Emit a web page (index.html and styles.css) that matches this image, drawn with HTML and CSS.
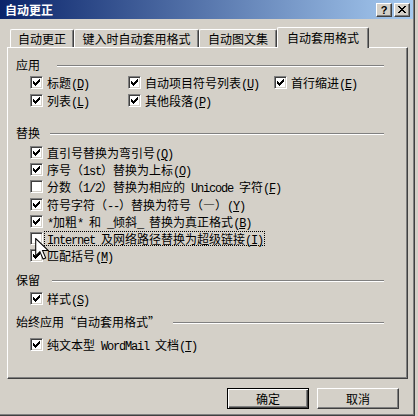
FILE: index.html
```html
<!DOCTYPE html>
<html lang="zh-CN">
<head>
<meta charset="utf-8">
<title>自动更正</title>
<link rel="stylesheet" href="styles.css">
</head>
<body>
<div class="window">
  <div class="titlebar">
    <span class="title">自动更正</span>
    <div class="tb-buttons">
      <span class="tb-btn help">?</span>
      <span class="tb-btn close"><svg width="8" height="7" viewBox="0 0 8 7" shape-rendering="crispEdges"><path d="M0 0h2v1H0zM6 0h2v1H6zM1 1h2v1H1zM5 1h2v1H5zM2 2h4v1H2zM3 3h2v1H3zM2 4h4v1H2zM1 5h2v1H1zM5 5h2v1H5zM0 6h2v1H0zM6 6h2v1H6z" fill="#000"/></svg></span>
    </div>
  </div>

  <div class="tabs">
    <div class="tab t1">自动更正</div>
    <div class="tab t2">键入时自动套用格式</div>
    <div class="tab t3">自动图文集</div>
    <div class="tab active">自动套用格式</div>
  </div>

  <div class="panel">
    <div class="group g-apply">
      <div class="glabel"><span class="gtext w-apply">应用</span><i class="rule"></i></div>
      <div class="rows">
        <div class="row">
          <div class="cell c1"><span class="box"><svg class="chk" width="11" height="11" viewBox="0 0 11 11" shape-rendering="crispEdges"><path d="M2 4h1v3H2zM3 5h1v3H3zM4 6h1v3H4zM5 5h1v3H5zM6 4h1v3H6zM7 3h1v3H7zM8 2h1v3H8z"/></svg></span><span class="lbl">标题<span class="m">(<u>D</u>)</span></span></div>
          <div class="cell c2"><span class="box"><svg class="chk" width="11" height="11" viewBox="0 0 11 11" shape-rendering="crispEdges"><path d="M2 4h1v3H2zM3 5h1v3H3zM4 6h1v3H4zM5 5h1v3H5zM6 4h1v3H6zM7 3h1v3H7zM8 2h1v3H8z"/></svg></span><span class="lbl">自动项目符号列表<span class="m">(<u>U</u>)</span></span></div>
          <div class="cell"><span class="box"><svg class="chk" width="11" height="11" viewBox="0 0 11 11" shape-rendering="crispEdges"><path d="M2 4h1v3H2zM3 5h1v3H3zM4 6h1v3H4zM5 5h1v3H5zM6 4h1v3H6zM7 3h1v3H7zM8 2h1v3H8z"/></svg></span><span class="lbl">首行缩进<span class="m">(<u>E</u>)</span></span></div>
        </div>
        <div class="row">
          <div class="cell c1"><span class="box"><svg class="chk" width="11" height="11" viewBox="0 0 11 11" shape-rendering="crispEdges"><path d="M2 4h1v3H2zM3 5h1v3H3zM4 6h1v3H4zM5 5h1v3H5zM6 4h1v3H6zM7 3h1v3H7zM8 2h1v3H8z"/></svg></span><span class="lbl">列表<span class="m">(<u>L</u>)</span></span></div>
          <div class="cell c2"><span class="box"><svg class="chk" width="11" height="11" viewBox="0 0 11 11" shape-rendering="crispEdges"><path d="M2 4h1v3H2zM3 5h1v3H3zM4 6h1v3H4zM5 5h1v3H5zM6 4h1v3H6zM7 3h1v3H7zM8 2h1v3H8z"/></svg></span><span class="lbl">其他段落<span class="m">(<u>P</u>)</span></span></div>
        </div>
      </div>
    </div>

    <div class="group g-replace">
      <div class="glabel"><span class="gtext w-replace">替换</span><i class="rule"></i></div>
      <div class="rows tight">
        <div class="row"><span class="box"><svg class="chk" width="11" height="11" viewBox="0 0 11 11" shape-rendering="crispEdges"><path d="M2 4h1v3H2zM3 5h1v3H3zM4 6h1v3H4zM5 5h1v3H5zM6 4h1v3H6zM7 3h1v3H7zM8 2h1v3H8z"/></svg></span><span class="lbl">直引号替换为弯引号<span class="m">(<u>Q</u>)</span></span></div>
        <div class="row"><span class="box"><svg class="chk" width="11" height="11" viewBox="0 0 11 11" shape-rendering="crispEdges"><path d="M2 4h1v3H2zM3 5h1v3H3zM4 6h1v3H4zM5 5h1v3H5zM6 4h1v3H6zM7 3h1v3H7zM8 2h1v3H8z"/></svg></span><span class="lbl">序号（<span class="m">1st</span>）替换为上标<span class="m">(<u>O</u>)</span></span></div>
        <div class="row"><span class="box"></span><span class="lbl">分数（<span class="m">1/2</span>）替换为相应的<span class="m"> Unicode </span>字符<span class="m">(<u>F</u>)</span></span></div>
        <div class="row"><span class="box"><svg class="chk" width="11" height="11" viewBox="0 0 11 11" shape-rendering="crispEdges"><path d="M2 4h1v3H2zM3 5h1v3H3zM4 6h1v3H4zM5 5h1v3H5zM6 4h1v3H6zM7 3h1v3H7zM8 2h1v3H8z"/></svg></span><span class="lbl">符号字符（<span class="m">--</span>）替换为符号（—）<span class="m">(<u>Y</u>)</span></span></div>
        <div class="row"><span class="box"><svg class="chk" width="11" height="11" viewBox="0 0 11 11" shape-rendering="crispEdges"><path d="M2 4h1v3H2zM3 5h1v3H3zM4 6h1v3H4zM5 5h1v3H5zM6 4h1v3H6zM7 3h1v3H7zM8 2h1v3H8z"/></svg></span><span class="lbl"><span class="m">*</span>加粗<span class="m">* </span>和<span class="m"> _</span>倾斜<span class="m">_ </span>替换为真正格式<span class="m">(<u>B</u>)</span></span></div>
        <div class="row"><span class="box"></span><span class="lbl focus"><span class="m">Internet </span>及网络路径替换为超级链接<span class="m">(<u>I</u>)</span></span></div>
        <div class="row"><span class="box"><svg class="chk" width="11" height="11" viewBox="0 0 11 11" shape-rendering="crispEdges"><path d="M2 4h1v3H2zM3 5h1v3H3zM4 6h1v3H4zM5 5h1v3H5zM6 4h1v3H6zM7 3h1v3H7zM8 2h1v3H8z"/></svg></span><span class="lbl">匹配括号<span class="m">(<u>M</u>)</span></span></div>
      </div>
    </div>

    <div class="group g-keep">
      <div class="glabel"><span class="gtext w-keep">保留</span><i class="rule"></i></div>
      <div class="rows">
        <div class="row"><span class="box"><svg class="chk" width="11" height="11" viewBox="0 0 11 11" shape-rendering="crispEdges"><path d="M2 4h1v3H2zM3 5h1v3H3zM4 6h1v3H4zM5 5h1v3H5zM6 4h1v3H6zM7 3h1v3H7zM8 2h1v3H8z"/></svg></span><span class="lbl">样式<span class="m">(<u>S</u>)</span></span></div>
      </div>
    </div>

    <div class="group g-always">
      <div class="glabel"><span class="gtext w-always">始终应用“自动套用格式”</span><i class="rule"></i></div>
      <div class="rows">
        <div class="row"><span class="box"><svg class="chk" width="11" height="11" viewBox="0 0 11 11" shape-rendering="crispEdges"><path d="M2 4h1v3H2zM3 5h1v3H3zM4 6h1v3H4zM5 5h1v3H5zM6 4h1v3H6zM7 3h1v3H7zM8 2h1v3H8z"/></svg></span><span class="lbl">纯文本型<span class="m"> WordMail </span>文档<span class="m">(<u>T</u>)</span></span></div>
      </div>
    </div>
  </div>

  <div class="btnrow">
    <div class="btn default">确定</div>
    <div class="btn">取消</div>
  </div>

  <svg class="cursor" width="14" height="22" viewBox="0 0 13 21"><path d="M0.5 0.5V17L4.5 13L7.5 20L10 19L7 12H12.5Z" fill="#fff" stroke="#000" stroke-width="1" stroke-linejoin="miter"/></svg>
</div>
</body>
</html>
```

FILE: styles.css
```css
* { box-sizing: border-box; }

html, body {
  margin: 0;
  padding: 0;
  width: 418px;
  height: 416px;
  overflow: hidden;
  background: #D4D0C8;
}

body {
  font: 12px "Noto Sans CJK SC", sans-serif;
  color: #000;
}

.window {
  position: relative;
  width: 415px;
  height: 416px;
  background: #D4D0C8;
  border-right: 1px solid #404040;
  border-bottom: 1px solid #404040;
  box-shadow: inset -1px -1px 0 #808080;
}

/* title bar */
.titlebar {
  height: 19px;
  margin-right: 1px;
  padding: 0 3px 0 5px;
  display: flex;
  align-items: center;
  justify-content: space-between;
  background: linear-gradient(to right, #0A246A, #A6CAF0);
}
.title {
  color: #fff;
  font-weight: bold;
  font-size: 12px;
  line-height: 14px;
}
.tb-buttons {
  display: flex;
  gap: 2px;
}
.tb-btn {
  width: 16px;
  height: 14px;
  display: flex;
  align-items: center;
  justify-content: center;
  background: #D4D0C8;
  border-top: 1px solid #fff;
  border-left: 1px solid #fff;
  border-right: 1px solid #404040;
  border-bottom: 1px solid #404040;
  box-shadow: inset -1px -1px 0 #808080;
}
.help {
  font: bold 11px "Liberation Sans", sans-serif;
  line-height: 12px;
}

/* tabs */
.tabs {
  position: relative;
  z-index: 1;
  display: flex;
  align-items: flex-end;
  height: 20px;
  margin-top: 8px;
  padding-left: 10px;
}
.tab {
  height: 18px;
  display: flex;
  align-items: center;
  justify-content: center;
  white-space: nowrap;
  background: #D4D0C8;
  border-top: 1px solid #fff;
  border-left: 1px solid #fff;
  border-right: 1px solid #404040;
  border-radius: 2px 2px 0 0;
  box-shadow: inset -1px 0 0 #808080;
  line-height: 14px;
}
.t1 { width: 64px; }
.t2 { width: 125px; }
.t3 { width: 78px; }
.tab.active {
  width: 92px;
  height: 21px;
  margin-bottom: -1px;
}

/* panel */
.panel {
  margin-left: 7px;
  width: 401px;
  height: 332px;
  padding: 10px 23px 0 8px;
  border-top: 1px solid #fff;
  border-left: 1px solid #fff;
  border-right: 1px solid #404040;
  border-bottom: 1px solid #404040;
  box-shadow: inset -1px -1px 0 #808080;
}

.glabel {
  display: flex;
  height: 14px;
  line-height: 14px;
  white-space: nowrap;
}
.gtext { flex: none; }
.w-apply { width: 41px; }
.w-replace { width: 34px; }
.w-keep { width: 36px; }
.w-always { width: 157px; }

.rule {
  flex: 1;
  height: 2px;
  margin-top: 7px;
  border-top: 1px solid #808080;
  border-bottom: 1px solid #fff;
}

.g-apply .rows { margin-top: 4px; }
.g-replace { margin-top: 14px; }
.g-replace .rows { margin-top: 6px; }
.g-keep { margin-top: 7px; }
.g-keep .rows { margin-top: 5px; }
.g-always { margin-top: 5px; }
.g-always .rows { margin-top: 9px; }

.rows { padding-left: 14px; }
.row {
  display: flex;
  align-items: flex-start;
  height: 18px;
}
.rows.tight .row { height: 17.2px; }

.cell {
  display: flex;
  align-items: flex-start;
}
.c1 { width: 98px; }
.c2 { width: 146px; }

.box {
  flex: none;
  width: 13px;
  height: 13px;
  background: #fff;
  border-top: 1px solid #808080;
  border-left: 1px solid #808080;
  border-right: 1px solid #fff;
  border-bottom: 1px solid #fff;
  box-shadow: inset 1px 1px 0 #404040, inset -1px -1px 0 #D4D0C8;
}
.chk {
  display: block;
  fill: #000;
}

.lbl {
  margin-left: 4px;
  line-height: 13px;
  height: 13px;
  white-space: nowrap;
}
.lbl.focus {
  margin-left: 1px;
  margin-top: -1px;
  height: 15px;
  padding: 0 1px 0 2px;
  border: 1px dotted #000;
}

.m {
  font-family: "Liberation Mono", monospace;
  font-size: 12px;
  letter-spacing: -1.2px;
}
u {
  text-decoration: underline;
  text-underline-offset: 1px;
}

/* buttons */
.btnrow {
  display: flex;
  justify-content: flex-end;
  gap: 8px;
  margin-top: 9px;
  padding-right: 15px;
}
.btn {
  width: 82px;
  height: 21px;
  display: flex;
  align-items: center;
  justify-content: center;
  line-height: 14px;
  background: #D4D0C8;
  border-top: 1px solid #fff;
  border-left: 1px solid #fff;
  border-right: 1px solid #404040;
  border-bottom: 1px solid #404040;
  box-shadow: inset -1px -1px 0 #808080;
}
.btn.default {
  border: 1px solid #000;
  box-shadow: inset 1px 1px 0 #fff, inset -1px -1px 0 #404040, inset -2px -2px 0 #808080;
}

/* mouse pointer overlay */
.cursor {
  position: absolute;
  left: 35px;
  top: 238px;
}
```
